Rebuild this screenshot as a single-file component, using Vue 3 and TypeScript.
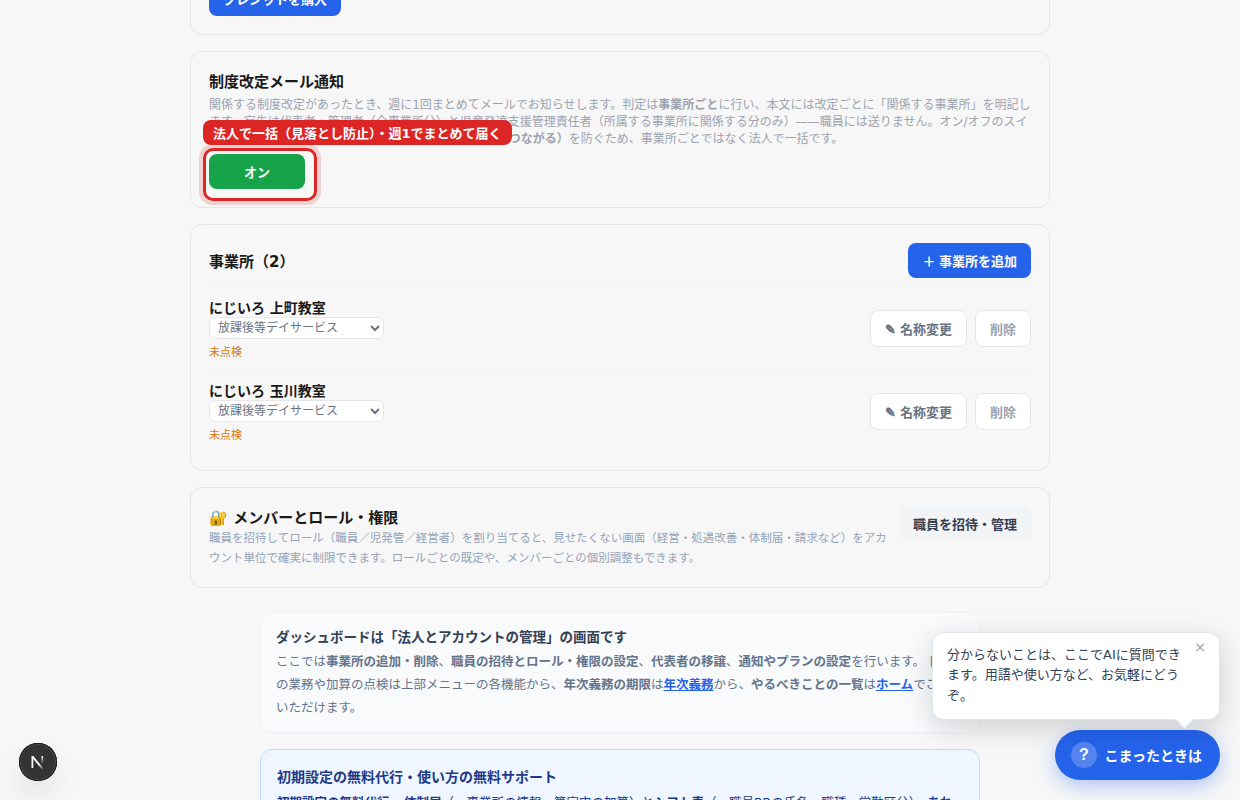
<script setup lang="ts">
interface Office { name: string; service: string; status: string }
const offices: Office[] = [
  { name: 'にじいろ 上町教室', service: '放課後等デイサービス', status: '未点検' },
  { name: 'にじいろ 玉川教室', service: '放課後等デイサービス', status: '未点検' },
]
</script>

<template>
  <div class="page">
    <main class="main">
      <section class="card credit"><button class="btn primary buy">クレジットを購入</button></section>

      <section class="card notify">
        <h2>制度改定メール通知</h2>
        <p class="desc">関係する制度改定があったとき、週に1回まとめてメールでお知らせします。判定は<b>事業所ごと</b>に行い、本文には改定ごとに「関係する事業所」を明記します。宛先は代表者・管理者（全事業所分）と児童発達支援管理責任者（所属する事業所に関係する分のみ）——職員には送りません。オン/オフのスイッチは法人ごと一つです。<b class="cause">一部だけ止まる（見落としにつながる）</b>を防ぐため、事業所ごとではなく法人で一括です。</p>
        <div class="toggle-wrap">
          <button class="btn toggle">オン</button>
          <div class="ring"></div>
          <div class="tag">法人で一括（見落とし防止）・週1でまとめて届く</div>
        </div>
      </section>

      <section class="card offices">
        <header class="head">
          <h2>事業所（2）</h2>
          <button class="btn primary">＋ 事業所を追加</button>
        </header>
        <div v-for="o in offices" :key="o.name" class="office">
          <div class="info">
            <div class="name">{{ o.name }}</div>
            <select class="service"><option>{{ o.service }}</option></select>
            <div class="status">{{ o.status }}</div>
          </div>
          <div class="actions">
            <button class="btn outline">✎ 名称変更</button>
            <button class="btn outline muted">削除</button>
          </div>
        </div>
      </section>

      <section class="card members">
        <div class="mtext">
          <h2>🔐 メンバーとロール・権限</h2>
          <p>職員を招待してロール（職員／児発管／経営者）を割り当てると、見せたくない画面（経営・処遇改善・体制届・請求など）をアカウント単位で確実に制限できます。ロールごとの既定や、メンバーごとの個別調整もできます。</p>
        </div>
        <button class="btn soft">職員を招待・管理</button>
      </section>
    </main>

    <div class="aside">
      <section class="about">
        <h3>ダッシュボードは「法人とアカウントの管理」の画面です</h3>
        <p>ここでは<b>事業所の追加・削除</b>、<b>職員の招待とロール・権限の設定</b>、<b>代表者の移譲</b>、<b>通知やプランの設定</b>を行います。 日々の業務や加算の点検は上部メニューの各機能から、<b>年次義務の期限</b>は<a>年次義務</a>から、<b>やるべきことの一覧</b>は<a>ホーム</a>でご確認いただけます。</p>
      </section>
      <section class="support">
        <h3>初期設定の無料代行・使い方の無料サポート</h3>
        <p><b>初期設定の無料代行</b>、 <b class="doc">体制届</b>（＝事業所の情報・算定中の加算）と<b>シフト表</b>（＝職員BBの氏名・職種・常勤区分）、<b>あれ</b></p>
      </section>
    </div>

    <div class="bubble">
      <p>分からないことは、ここでAIに質問できます。用語や使い方など、お気軽にどうぞ。</p>
      <button class="close" aria-label="閉じる">×</button>
      <i class="tail"></i>
    </div>
    <button class="help"><span class="q">?</span>こまったときは</button>

    <div class="dev">
      <svg width="38" height="38" viewBox="0 0 38 38" fill="none">
        <defs>
          <linearGradient id="ng" x1="23.5" y1="13" x2="23.5" y2="21" gradientUnits="userSpaceOnUse"><stop stop-color="#fff" /><stop offset="1" stop-color="#fff" stop-opacity="0" /></linearGradient>
          <linearGradient id="nd" x1="20" y1="21" x2="24.5" y2="26.5" gradientUnits="userSpaceOnUse"><stop stop-color="#fff" /><stop offset="1" stop-color="#fff" stop-opacity="0" /></linearGradient>
        </defs>
        <path d="M13.4 13.3L23.8 26.2" stroke="url(#nd)" stroke-width="1.9" />
        <path d="M13.4 25V13" stroke="#fff" stroke-width="1.8" />
        <path d="M23.3 13V21.5" stroke="url(#ng)" stroke-width="1.7" />
      </svg>
    </div>
  </div>
</template>

<style>
body { margin: 0; background: #f7f7f7; overflow: hidden; }
</style>

<style scoped>
* { box-sizing: border-box; }
.page { height: 800px; overflow: hidden; position: relative; background: #f7f7f7; color: #1a1a1a; font-family: "DejaVu Sans", "Noto Sans CJK JP", sans-serif; }
h2, h3, p { margin: 0; }
button, select { font-family: inherit; }
.main { width: 860px; margin: 0 auto; display: flex; flex-direction: column; gap: 16px; }
.card { border: 1px solid #e5e5e5; border-radius: 12px; padding: 18px; }
.credit { height: 55px; margin-top: -20px; position: relative; display: flex; align-items: flex-end; }
.btn { border: 0; border-radius: 8px; height: 35px; padding: 2px 14px 0; font-family: "Liberation Sans", "Noto Sans CJK JP", sans-serif; font-size: 13px; font-weight: 700; line-height: 19px; white-space: nowrap; }
.primary { background: #2563eb; color: #fff; }
h2 { font-size: 15px; line-height: 22px; font-weight: 700; }
.notify { height: 157px; padding-top: 19px; }
.desc { font-size: 12px; line-height: 17px; color: #9ca3af; margin-top: 4px; }
.cause { margin-left: 1px; }
.toggle-wrap { position: relative; margin-top: 6px; width: 96px; }
.toggle { width: 96px; background: #16a34a; color: #fff; display: block; }
.ring { position: absolute; left: -6px; top: -6px; width: 114px; height: 53px; border: 3px solid #dc2626; border-radius: 10px; box-shadow: 0 0 0 4px rgba(220, 38, 38, .18); }
.tag { position: absolute; left: -6px; top: -34px; height: 25px; padding: 0 10px; border-radius: 8px; background: #dc2626; color: #fff; font-weight: 700; font-size: 13px; line-height: 27px; white-space: nowrap; }
.offices { height: 247px; }
.head { display: flex; justify-content: space-between; align-items: center; margin-bottom: 8px; }
.head h2 { padding-top: 2px; }
.office { height: 83px; border-top: 1px solid #f3f4f6; display: flex; justify-content: space-between; align-items: center; }
.name { font-size: 14px; line-height: 20px; font-weight: 700; padding-top: 1px; margin-bottom: -1px; }
.service { display: block; width: 175px; height: 22px; padding: 0 4px; border: 1px solid #e5e7eb; border-radius: 6px; background: #fff; color: #6b7280; font-size: 12px; }
.status { font-size: 11px; line-height: 16px; color: #d97706; margin: 6px 0 -1px; }
.actions { display: flex; gap: 8px; }
.outline { height: 37px; background: #fff; border: 1px solid #e5e7eb; color: #6b7280; }
.muted { color: #9ca3af; }
.members { height: 101px; display: flex; gap: 12px; align-items: flex-start; }
.mtext { flex: 1; min-width: 0; padding-top: 1px; }
.mtext p { font-size: 11.5px; line-height: 19.55px; color: #94a3b8; }
.soft { background: #f3f4f6; color: #374151; }
.aside { width: 720px; margin: 24px auto 0; display: flex; flex-direction: column; gap: 16px; }
.about { height: 121px; border: 1px solid #eef2f7; border-radius: 12px; background: #f8fafc; padding: 13px 15px; }
.about h3 { font-size: 13.5px; line-height: 23px; color: #334155; }
.about p { font-size: 12.5px; line-height: 23.1px; color: #64748b; margin-top: 1px; }
.about a { color: #2563eb; font-weight: 700; text-decoration: underline; }
.support { height: 140px; border: 1px solid #bfdbfe; border-radius: 12px; background: #eff6ff; padding: 16px; color: #1e3a8a; }
.support h3 { font-size: 14px; line-height: 22px; }
.support p { font-size: 12.5px; line-height: 22px; margin-top: 4px; white-space: nowrap; }
.doc { margin-left: -2px; }
.bubble { position: absolute; z-index: 1; left: 932px; top: 632px; width: 288px; height: 88px; background: #fff; border: 1px solid #e2e8f0; border-radius: 12px; padding: 12px 34px 12px 14px; box-shadow: 0 8px 28px rgba(0, 0, 0, .16); font-size: 13px; line-height: 20.3px; color: #334155; }
.close { position: absolute; right: 13px; top: 5px; border: 0; background: none; padding: 0; font-size: 14px; line-height: 18px; color: #94a3b8; }
.tail { position: absolute; right: 28px; bottom: -7px; width: 13px; height: 13px; transform: rotate(45deg); background: #fff; border-right: 1px solid #e2e8f0; border-bottom: 1px solid #e2e8f0; }
.help { position: absolute; left: 1055px; top: 730px; width: 165px; height: 50px; border: 0; border-radius: 25px; padding: 0 16px; display: flex; align-items: center; gap: 7.5px; background: #2563eb; color: #fff; font-size: 14px; font-weight: 700; white-space: nowrap; box-shadow: 0 6px 20px rgba(37, 99, 235, .35); }
.q { width: 26px; height: 26px; border-radius: 50%; background: rgba(255, 255, 255, .22); font-family: "Liberation Sans", sans-serif; font-size: 16px; line-height: 26px; text-align: center; }
.dev { position: absolute; left: 19px; top: 743px; width: 38px; height: 38px; border-radius: 50%; background: #333; box-shadow: inset 0 0 0 1px #171717, inset 0 0 0 2px #4a4a4a, 0 16px 32px -8px rgba(0, 0, 0, .24); }
.dev svg { display: block; }
</style>
